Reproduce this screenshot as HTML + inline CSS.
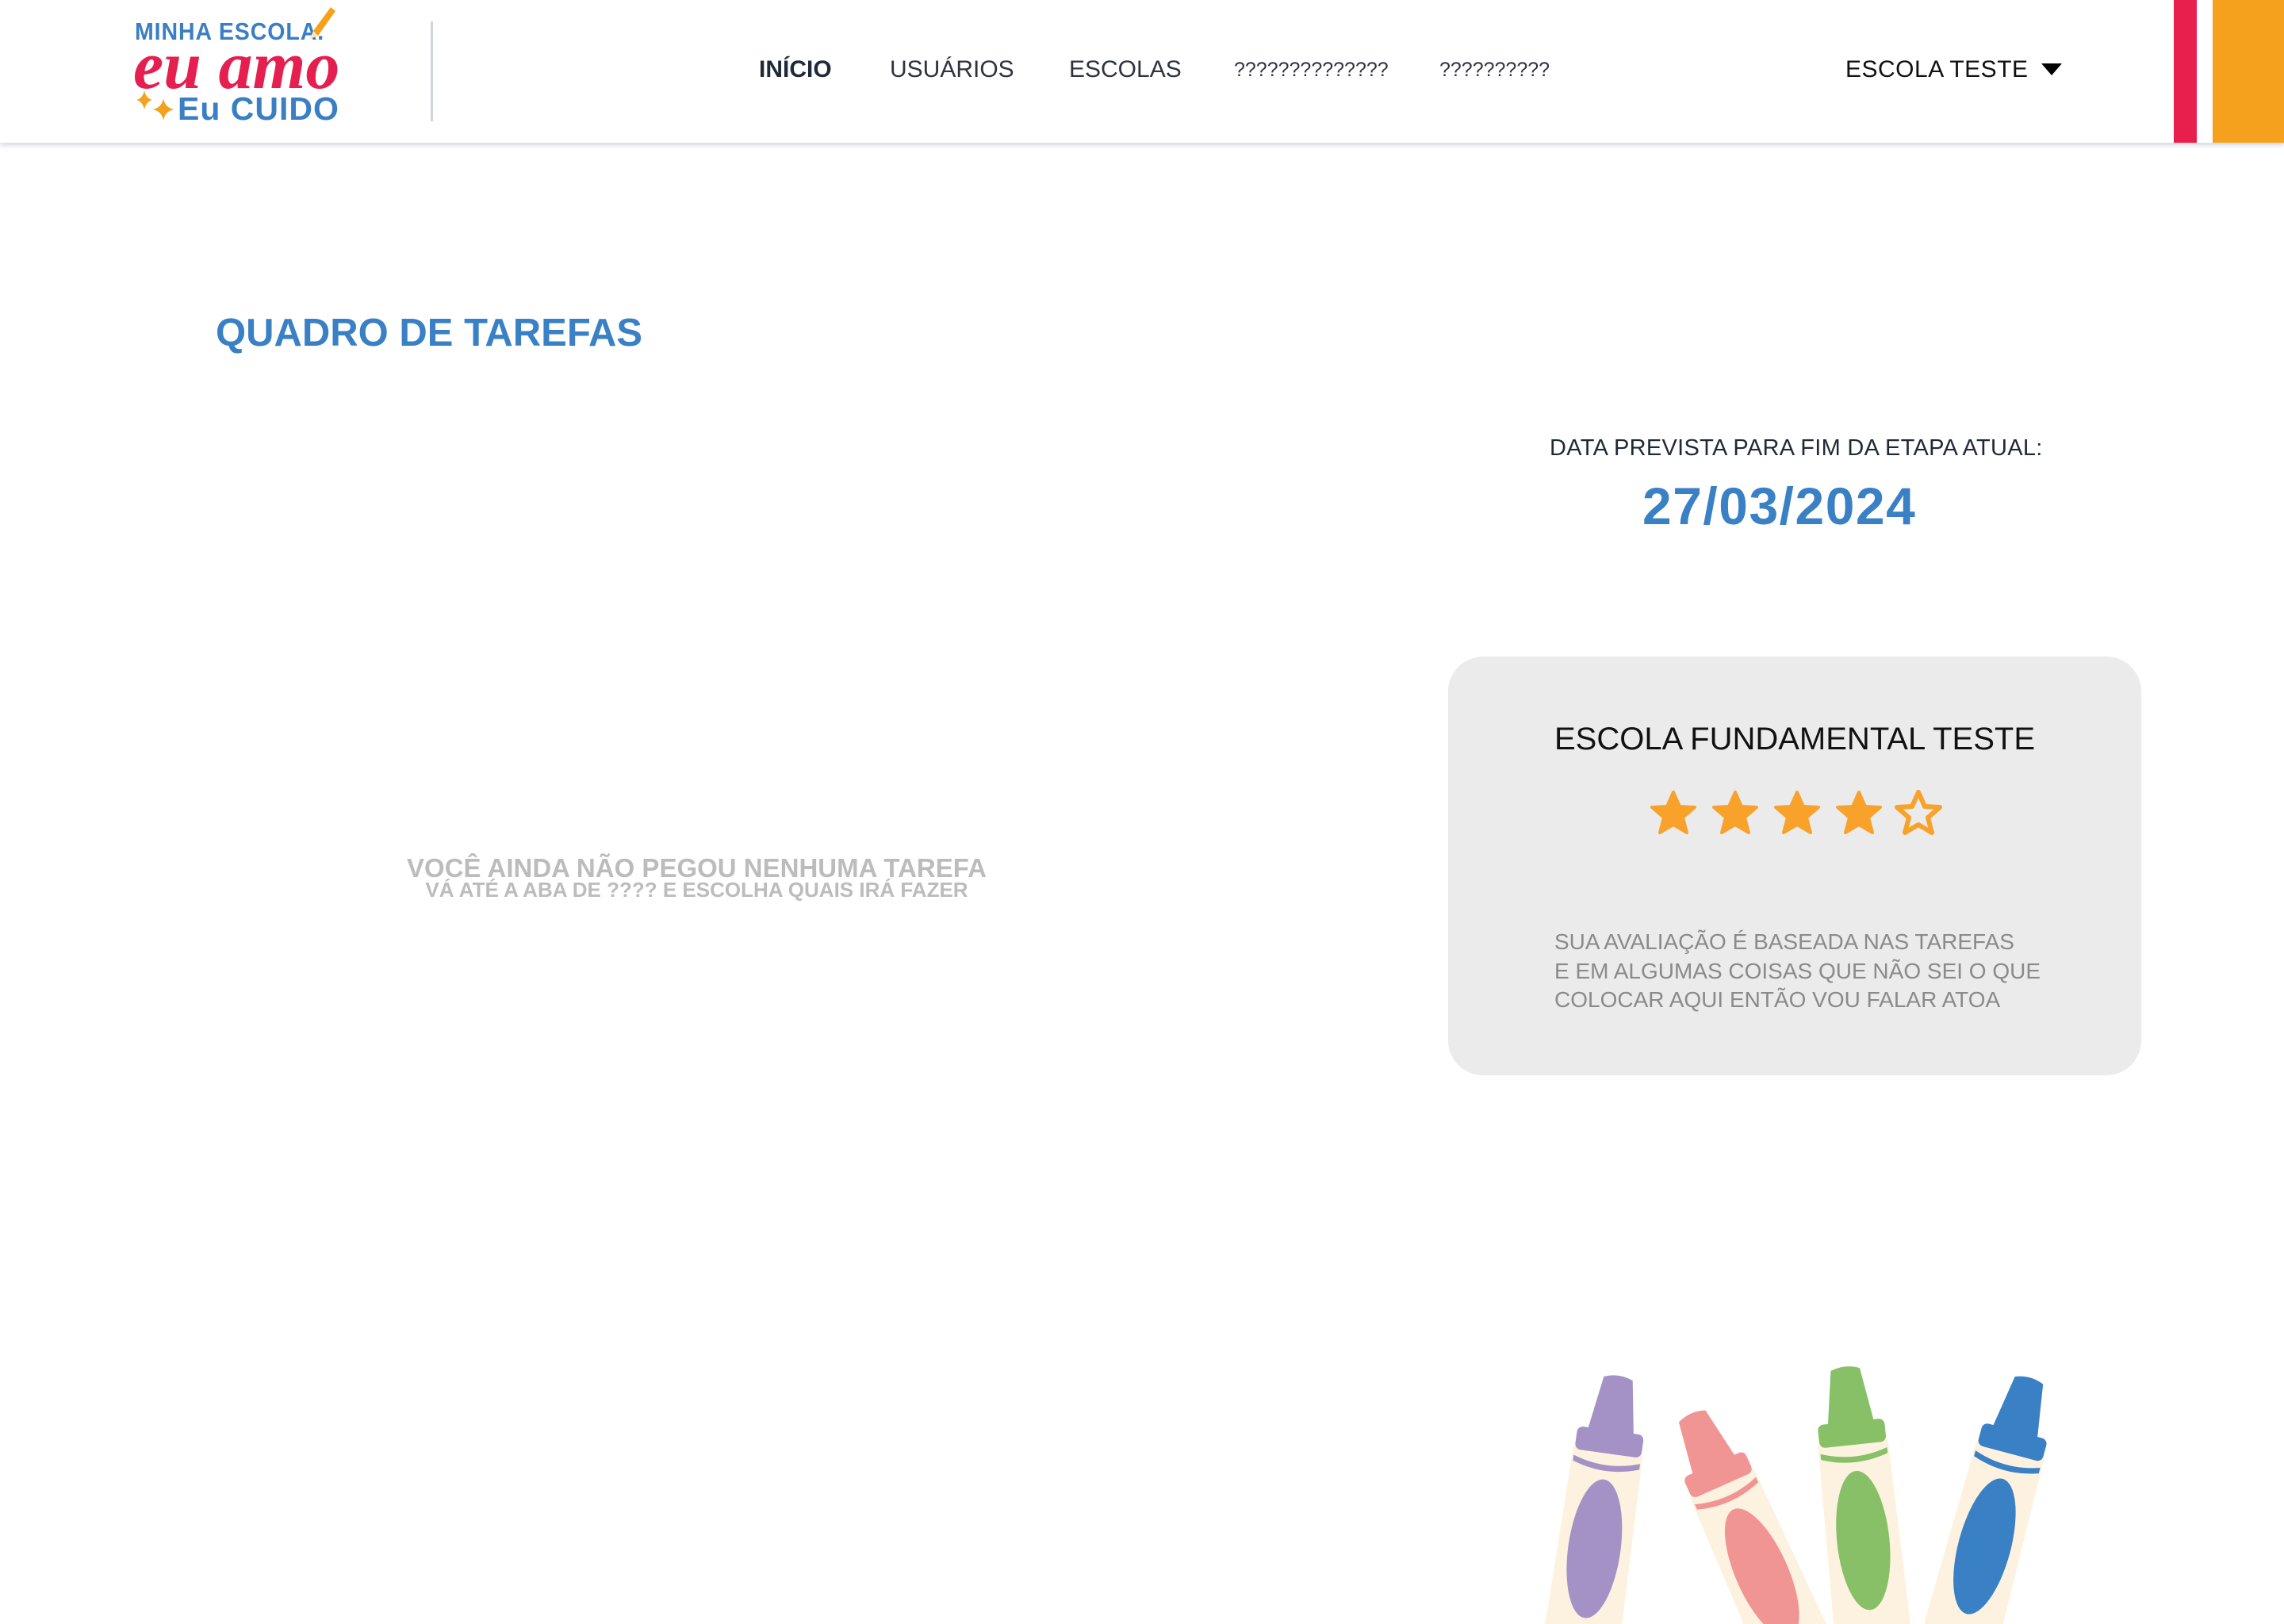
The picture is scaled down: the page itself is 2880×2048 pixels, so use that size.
<!DOCTYPE html>
<html><head><meta charset="utf-8">
<style>
*{margin:0;padding:0;box-sizing:border-box}
html,body{width:2880px;height:2048px;overflow:hidden}
body{position:relative;background:#fff;font-family:"Liberation Sans",sans-serif}
.a{position:absolute;white-space:nowrap}
header{position:absolute;left:0;top:0;width:2880px;height:180px;background:#fff;box-shadow:0 3px 6px rgba(120,140,160,.35)}
.nav{top:71px;font-size:30px;color:#2d3440}
</style></head><body>
<header>
  <div class="a" style="left:170px;top:22px;font-size:31px;font-weight:bold;color:#3a7ec4;letter-spacing:1px;transform:scaleX(.92);transform-origin:left">MINHA ESCOLA.</div>
  <div class="a" style="left:168px;top:32px;font-size:86px;font-weight:bold;font-style:italic;color:#e51f4f;letter-spacing:0px;font-family:'Liberation Serif',serif">eu amo</div>
  <div class="a" style="left:224px;top:114px;font-size:41px;font-weight:bold;color:#3a7ec4;letter-spacing:1px">Eu CUIDO</div>
  <svg class="a" style="left:170px;top:110px" width="60" height="50" viewBox="0 0 60 50">
    <path d="M12 4 Q14 14 22 16 Q14 18 12 28 Q10 18 2 16 Q10 14 12 4Z" fill="#f5a11c"/>
    <path d="M36 14 Q38 26 50 28 Q38 30 36 42 Q34 30 22 28 Q34 26 36 14Z" fill="#f5a11c"/>
  </svg>
  <svg class="a" style="left:385px;top:5px" width="40" height="50" viewBox="0 0 40 50">
    <path d="M6 44 L10 34 L32 4 L38 9 L16 40Z" fill="#f5a11c"/>
    <path d="M6 44 L10 34 L16 40Z" fill="#fbe7c2"/>
  </svg>
  <div class="a" style="left:543px;top:27px;width:3px;height:126px;background:#cfd6de"></div>
  <div class="a nav" style="left:957px;font-weight:bold;color:#1f2a38">INÍCIO</div>
  <div class="a nav" style="left:1122px">USUÁRIOS</div>
  <div class="a nav" style="left:1348px">ESCOLAS</div>
  <div class="a nav" style="left:1556px;font-size:25px;top:74px">??????????????</div>
  <div class="a nav" style="left:1815px;font-size:25px;top:74px">??????????</div>
  <div class="a" style="left:2327px;top:71px;font-size:30px;color:#111;letter-spacing:.5px">ESCOLA TESTE</div>
  <svg class="a" style="left:2574px;top:80px" width="26" height="16"><path d="M0 0H26L13 15Z" fill="#000"/></svg>
  <div class="a" style="left:2741px;top:0;width:29px;height:180px;background:#e81f4d"></div>
  <div class="a" style="left:2790px;top:0;width:90px;height:180px;background:#f6a11e"></div>
</header>

<div class="a" style="left:272px;top:392px;font-size:49px;font-weight:bold;color:#3a80c4">QUADRO DE TAREFAS</div>

<div class="a" style="left:1954px;top:549px;font-size:29px;color:#1f2a38;letter-spacing:.3px">DATA PREVISTA PARA FIM DA ETAPA ATUAL:</div>
<div class="a" style="left:2071px;top:600px;font-size:66px;color:#3a80c4;font-weight:bold;letter-spacing:1.5px">27/03/2024</div>

<div class="a" style="left:0;width:1757px;top:1076px;text-align:center;font-size:33px;font-weight:bold;color:#bcbcbc">VOCÊ AINDA NÃO PEGOU NENHUMA TAREFA</div>
<div class="a" style="left:0;width:1757px;top:1107px;text-align:center;font-size:26px;font-weight:bold;color:#bcbcbc">VÁ ATÉ A ABA DE ???? E ESCOLHA QUAIS IRÁ FAZER</div>

<div class="a" style="left:1826px;top:828px;width:874px;height:528px;background:#ebebeb;border-radius:44px"></div>
<div class="a" style="left:1826px;width:874px;top:910px;text-align:center;font-size:40px;color:#111">ESCOLA FUNDAMENTAL TESTE</div>
<svg class="a" style="left:2070px;top:990px" width="380" height="70" viewBox="0 0 380 70">
  <defs><path id="s" d="M0 -26 L8 -8 L27 -7 L12 6 L17 25 L0 15 L-17 25 L-12 6 L-27 -7 L-8 -8Z" stroke-linejoin="round"/></defs>
  <use href="#s" x="40" y="35" fill="#f8a22c" stroke="#f8a22c" stroke-width="4"/>
  <use href="#s" x="118" y="35" fill="#f8a22c" stroke="#f8a22c" stroke-width="4"/>
  <use href="#s" x="196" y="35" fill="#f8a22c" stroke="#f8a22c" stroke-width="4"/>
  <use href="#s" x="274" y="35" fill="#f8a22c" stroke="#f8a22c" stroke-width="4"/>
  <use href="#s" x="349" y="35" fill="none" stroke="#f8a22c" stroke-width="6"/>
</svg>
<div class="a" style="left:1960px;top:1170px;font-size:28px;color:#8a8a8a;line-height:36.5px">SUA AVALIAÇÃO É BASEADA NAS TAREFAS<br>E EM ALGUMAS COISAS QUE NÃO SEI O QUE<br>COLOCAR AQUI ENTÃO VOU FALAR ATOA</div>

<svg class="a" style="left:0;top:0" width="2880" height="2048" viewBox="0 0 1568 1115" preserveAspectRatio="none">
  <defs>
    <g id="cr">
      <path d="M-24 0 L24 0 L28 220 L-28 220Z" fill="#fdf2df"/>
      <path d="M-16 -12 L-10 -50 Q0 -54 10 -50 L16 -12Z" fill="var(--c)"/>
      <rect x="-23" y="-14" width="46" height="16" rx="4" fill="var(--c)"/>
      <path d="M-23 6 Q0 14 23 6 L23 10 Q0 18 -23 10Z" fill="var(--c)"/>
      <ellipse cx="0" cy="68" rx="18" ry="48" fill="var(--c)"/>
    </g>
  </defs>
  <use href="#cr" style="--c:#a492c6" transform="translate(1104 996) rotate(8)"/>
  <use href="#cr" style="--c:#f09594" transform="translate(1182 1018) rotate(-24)"/>
  <use href="#cr" style="--c:#87c067" transform="translate(1272 990) rotate(-6)"/>
  <use href="#cr" style="--c:#3a80c4" transform="translate(1380 996) rotate(15)"/>
</svg>
</body></html>
